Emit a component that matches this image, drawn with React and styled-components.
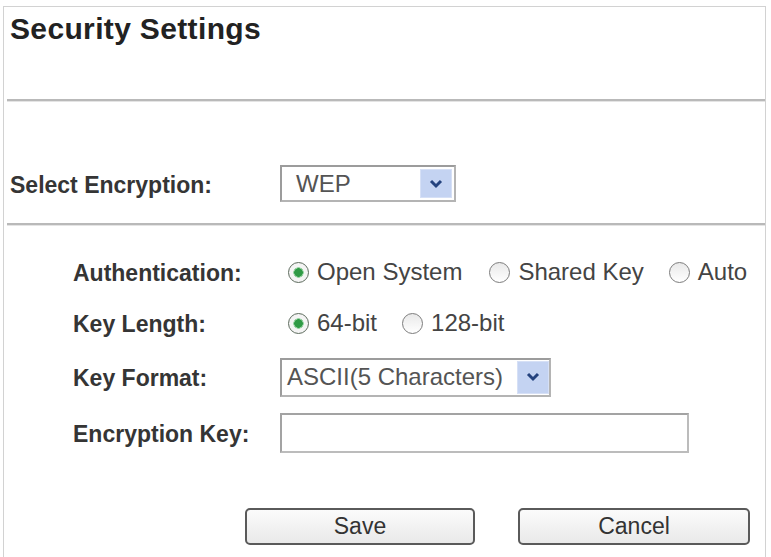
import React from "react";
import styled, { createGlobalStyle } from "styled-components";

const Global = createGlobalStyle`
  html, body { margin: 0; padding: 0; background: #ffffff; }
  body { font-family: "Liberation Sans", Arial, sans-serif; }
`;

const Frame = styled.div`
  box-sizing: border-box;
  margin: 6px 0 0 3px;
  width: 763px;
  height: 551px;
  border: 1px solid #d2d2d2;
  border-bottom: none;
  display: flex;
  flex-direction: column;
  background: #fff;
`;

const Header = styled.div`
  height: 92px;
  padding: 5px 0 0 6px;
  box-sizing: border-box;
`;

const Title = styled.h1`
  margin: 0;
  font-size: 30px;
  line-height: 34px;
  font-weight: bold;
  color: #222;
  letter-spacing: 0.35px;
`;

const Divider = styled.div`
  height: 2px;
  margin-left: 3px;
  background: #b9b9b9;
  border-bottom: 1px solid #e4e4e4;
`;

const EncryptionRow = styled.div`
  display: grid;
  grid-template-columns: 270px auto;
  align-items: center;
  padding: 63px 0 21px 6px;
`;

const Label = styled.span`
  font-size: 23px;
  font-weight: bold;
  color: #353535;
  white-space: nowrap;
  padding-top: 3px;
`;

const SelectBox = styled.div`
  box-sizing: border-box;
  width: ${(p) => p.$width}px;
  height: ${(p) => p.$height}px;
  border: 2px solid #9c9c9c;
  border-right-color: #b4b4b4;
  border-bottom-color: #b4b4b4;
  background: #fff;
  display: flex;
  align-items: center;
  justify-content: space-between;
  padding: 0 ${(p) => p.$inset}px 0 ${(p) => p.$padLeft}px;
`;

const SelectText = styled.span`
  font-size: 24px;
  color: #545454;
  white-space: nowrap;
`;

const ArrowBox = styled.span`
  box-sizing: border-box;
  width: 32px;
  height: ${(p) => p.$h}px;
  background: #c4d3f2;
  border: 1px solid #d6e0f6;
  display: flex;
  align-items: center;
  justify-content: center;
`;

const Section = styled.div`
  display: grid;
  grid-template-columns: 207px auto;
  grid-template-rows: 50px 52px 56px 56px;
  align-items: center;
  padding: 21px 0 0 69px;
`;

const Options = styled.div`
  display: flex;
  align-items: center;
`;

const Option = styled.label`
  display: flex;
  align-items: center;
  margin-left: 8px;
  margin-right: ${(p) => p.$after}px;
  font-size: 24px;
  color: #444;
  white-space: nowrap;
`;

const Radio = styled.span`
  box-sizing: border-box;
  width: 21px;
  height: 21px;
  border-radius: 50%;
  border: 1.5px solid ${(p) => (p.$checked ? "#5d6b5d" : "#7c7c7c")};
  background: ${(p) =>
    p.$checked
      ? "radial-gradient(circle, #2f9a45 0 4px, #9ad3a4 4.5px 5px, #f4f4f4 5.5px)"
      : "linear-gradient(#e9e9e9, #ffffff)"};
  margin-right: 8px;
  flex: none;
`;

const TextInput = styled.input`
  box-sizing: border-box;
  width: 409px;
  height: 40px;
  border: 2px solid #a3a3a3;
  border-right-color: #bcbcbc;
  border-bottom-color: #bcbcbc;
  background: #fff;
  padding: 0 6px;
  font-size: 22px;
  font-family: inherit;
  outline: none;
`;

const Buttons = styled.div`
  display: flex;
  gap: 43px;
  padding: 47px 0 0 241px;
`;

const Button = styled.button`
  box-sizing: border-box;
  width: ${(p) => p.$width}px;
  height: 37px;
  border: 2px solid #5a5a5a;
  border-radius: 5px;
  background: linear-gradient(#fbfbfb, #e9e9e9);
  font-family: inherit;
  font-size: 23px;
  color: #333;
  padding: 0;
  cursor: pointer;
`;

const Chevron = () => (
  <svg width="14" height="10" viewBox="0 0 14 10">
    <path d="M2 2 L7 7 L12 2" fill="none" stroke="#24427e" strokeWidth="3" />
  </svg>
);

const Select = ({ text, width, height, padLeft, inset, arrowH }) => (
  <SelectBox $width={width} $height={height} $padLeft={padLeft} $inset={inset}>
    <SelectText>{text}</SelectText>
    <ArrowBox $h={arrowH}>
      <Chevron />
    </ArrowBox>
  </SelectBox>
);

const RadioOption = ({ checked, children, after }) => (
  <Option $after={after}>
    <Radio $checked={checked} />
    {children}
  </Option>
);

export default function App() {
  return (
    <>
      <Global />
      <Frame>
        <Header>
          <Title>Security Settings</Title>
        </Header>
        <Divider />
        <EncryptionRow>
          <Label>Select Encryption:</Label>
          <Select text="WEP" width={176} height={37} padLeft={14} inset={2} arrowH={29} />
        </EncryptionRow>
        <Divider />
        <Section>
          <Label>Authentication:</Label>
          <Options>
            <RadioOption checked after={19}>Open System</RadioOption>
            <RadioOption after={17}>Shared Key</RadioOption>
            <RadioOption after={0}>Auto</RadioOption>
          </Options>
          <Label>Key Length:</Label>
          <Options>
            <RadioOption checked after={17}>64-bit</RadioOption>
            <RadioOption after={0}>128-bit</RadioOption>
          </Options>
          <Label>Key Format:</Label>
          <Select text="ASCII(5 Characters)" width={271} height={39} padLeft={5} inset={0} arrowH={33} />
          <Label>Encryption Key:</Label>
          <TextInput type="text" />
        </Section>
        <Buttons>
          <Button $width={230}>Save</Button>
          <Button $width={232}>Cancel</Button>
        </Buttons>
      </Frame>
    </>
  );
}
